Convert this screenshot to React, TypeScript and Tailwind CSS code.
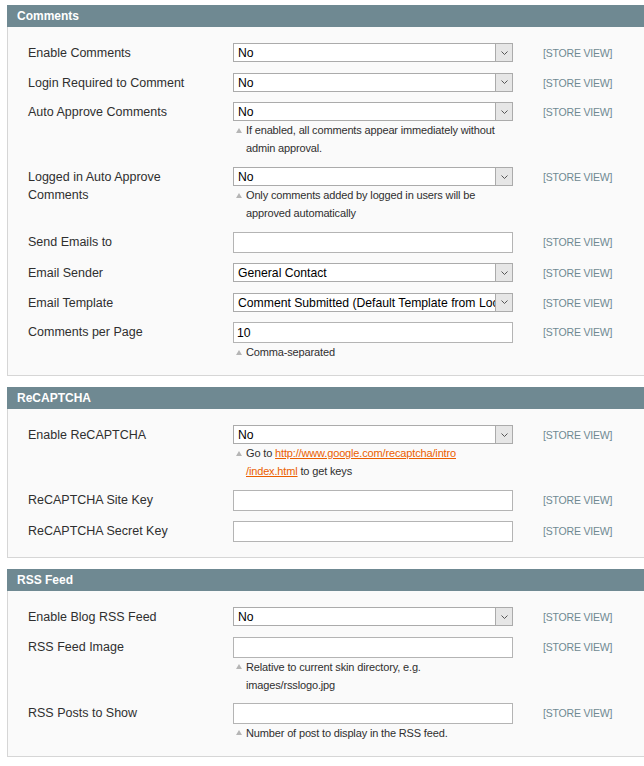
import React from "react";

type Field = {
  label: string[];
  kind: "select" | "input";
  value?: string;
  hint?: React.ReactNode[];
};

type Section = {
  title: string;
  fields: Field[];
};

const sections: Section[] = [
  {
    title: "Comments",
    fields: [
      { label: ["Enable Comments"], kind: "select", value: "No" },
      { label: ["Login Required to Comment"], kind: "select", value: "No" },
      {
        label: ["Auto Approve Comments"],
        kind: "select",
        value: "No",
        hint: ["If enabled, all comments appear immediately without", "admin approval."],
      },
      {
        label: ["Logged in Auto Approve", "Comments"],
        kind: "select",
        value: "No",
        hint: ["Only comments added by logged in users will be", "approved automatically"],
      },
      { label: ["Send Emails to"], kind: "input", value: "" },
      { label: ["Email Sender"], kind: "select", value: "General Contact" },
      {
        label: ["Email Template"],
        kind: "select",
        value: "Comment Submitted (Default Template from Locale)",
      },
      { label: ["Comments per Page"], kind: "input", value: "10", hint: ["Comma-separated"] },
    ],
  },
  {
    title: "ReCAPTCHA",
    fields: [
      {
        label: ["Enable ReCAPTCHA"],
        kind: "select",
        value: "No",
        hint: [
          <>
            Go to{" "}
            <a href="#" className="text-[#eb5e00] underline">
              http://www.google.com/recaptcha/intro
            </a>
          </>,
          <>
            <a href="#" className="text-[#eb5e00] underline">
              /index.html
            </a>{" "}
            to get keys
          </>,
        ],
      },
      { label: ["ReCAPTCHA Site Key"], kind: "input", value: "" },
      { label: ["ReCAPTCHA Secret Key"], kind: "input", value: "" },
    ],
  },
  {
    title: "RSS Feed",
    fields: [
      { label: ["Enable Blog RSS Feed"], kind: "select", value: "No" },
      {
        label: ["RSS Feed Image"],
        kind: "input",
        value: "",
        hint: ["Relative to current skin directory, e.g.", "images/rsslogo.jpg"],
      },
      {
        label: ["RSS Posts to Show"],
        kind: "input",
        value: "",
        hint: ["Number of post to display in the RSS feed."],
      },
    ],
  },
];

function SelectBox({ value }: { value?: string }) {
  return (
    <div className="flex h-[19px] w-[280px] border border-[#ababab] bg-white">
      <div className="flex-1 overflow-hidden whitespace-nowrap pl-[4px] text-[12.2px] leading-[18px] text-black">
        {value}
      </div>
      <div className="flex w-[17px] shrink-0 items-center justify-center border-l border-[#ababab] bg-[#e6e6e6]">
        <svg width="7" height="4" viewBox="0 0 7 4">
          <path d="M0.5 0.5 L3.5 3.5 L6.5 0.5" fill="none" stroke="#555" strokeWidth="1" />
        </svg>
      </div>
    </div>
  );
}

function InputBox({ value }: { value?: string }) {
  return (
    <div className="h-[21px] w-[280px] border border-[#b4b4b4] bg-white pl-[3px] text-[12.2px] leading-[20px] text-black">
      {value}
    </div>
  );
}

function Hint({ lines }: { lines: React.ReactNode[] }) {
  return (
    <div className="flex text-[11px] leading-[18px] tracking-[-0.15px] text-[#2f2f2f]">
      <div className="flex h-[18px] w-[13px] shrink-0 items-center pl-[3px]">
        <svg width="6" height="5" viewBox="0 0 6 5">
          <polygon points="3,0 6,5 0,5" fill="#b5b5b5" />
        </svg>
      </div>
      <div>
        {lines.map((line, i) => (
          <div key={i}>{line}</div>
        ))}
      </div>
    </div>
  );
}

function FieldRow({ field }: { field: Field }) {
  // row bottom padding differs a little between control types
  let pad = "pb-[6px]";
  if (field.kind === "select" && !field.hint) pad = "pb-[6.5px]";
  else if (field.kind === "input" && field.hint) pad = "pb-[5px]";
  return (
    <div className={`flex pt-[4px] ${pad}`}>
      <div className="w-[205px] shrink-0 pt-[1px] text-[12.5px] leading-[18px] text-[#2f2f2f]">
        {field.label.map((l) => (
          <div key={l}>{l}</div>
        ))}
      </div>
      <div className="w-[280px] shrink-0">
        {field.kind === "select" ? <SelectBox value={field.value} /> : <InputBox value={field.value} />}
        {field.hint && <Hint lines={field.hint} />}
      </div>
      <div className="ml-[30px] pt-[1px] text-[10.5px] leading-[18px] tracking-[-0.2px] text-[#6f8992]">
        [STORE VIEW]
      </div>
    </div>
  );
}

export default function App() {
  return (
    <div
      className="min-h-[766px] w-[644px] overflow-hidden bg-white pl-[7px] pt-[5px]"
      style={{ fontFamily: '"Liberation Sans", Arial, sans-serif' }}
    >
      {sections.map((section) => (
        <div key={section.title} className="mb-[11px] w-[680px]">
          <div className="h-[22px] bg-[#6f8992] px-[10px] text-[12px] font-bold leading-[22px] text-white">
            {section.title}
          </div>
          <div className="border border-t-0 border-[#d6d6d6] bg-[#fafafa] pb-[9px] pl-[20px] pt-[12px]">
            {section.fields.map((field) => (
              <FieldRow key={field.label.join(" ")} field={field} />
            ))}
          </div>
        </div>
      ))}
    </div>
  );
}
